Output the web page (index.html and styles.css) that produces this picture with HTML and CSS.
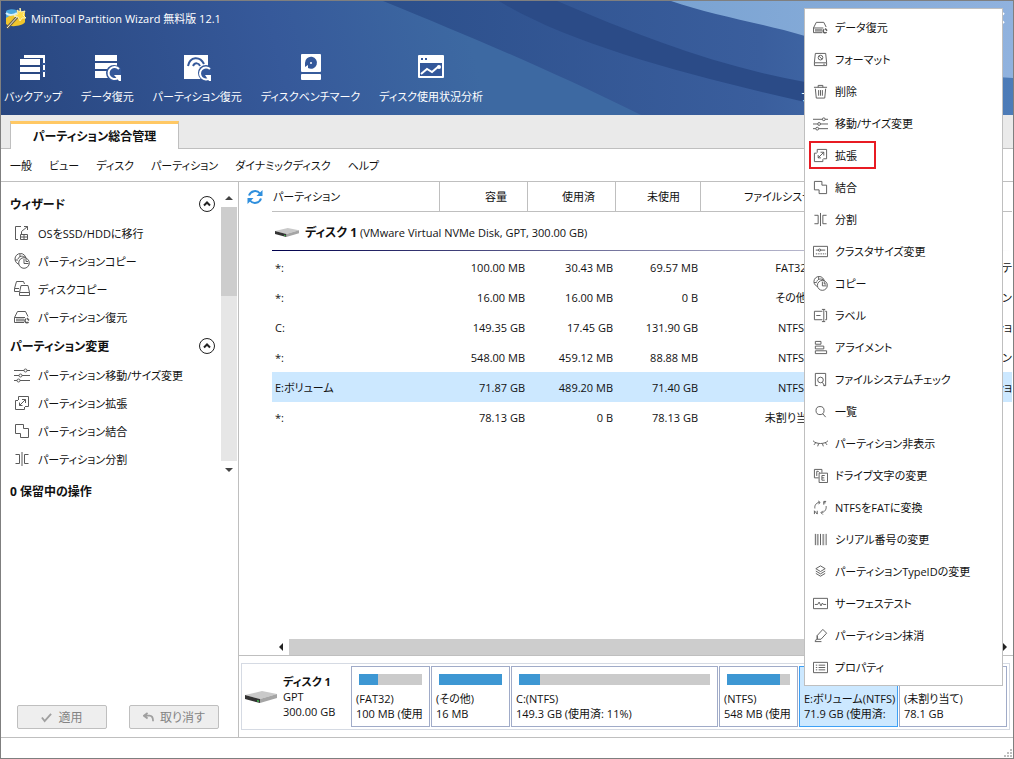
FILE: index.html
```html
<!DOCTYPE html>
<html lang="ja">
<head>
  <meta charset="UTF-8">
  <meta name="viewport" content="width=device-width, initial-scale=1">
  <title>MiniTool Partition Wizard 無料版 12.1</title>
  <link rel="stylesheet" href="styles.css">
</head>
<body>

<svg class="sprite" aria-hidden="true">
  <symbol id="i-recover" viewBox="0 0 16 16">
    <path d="M0.500 8.500L3.500 2.500H11.500L14 7.500M0.500 8.500V13.500H10M0.500 8.500H11"/>
    <path d="M2 11H10" stroke-width="3" stroke="#999"/>
    <path d="M12 10a2 2 0 1 0 2.500 3M13 9l2 2.500" stroke-width="1.500"/>
  </symbol>
  <symbol id="i-format" viewBox="0 0 16 16">
    <path d="M2.500 1.500H13.500L14.500 11V14.500H1.500V11ZM1.500 11.500H14.500M11 13H12.500"/>
    <circle cx="8" cy="6" r="2.500"/><path d="M6.500 4.500L9.500 7.500"/>
  </symbol>
  <symbol id="i-trash" viewBox="0 0 16 16">
    <path d="M1 3.500H15M5.500 3.500V1.500H10.500V3.500M2.500 5L3.500 15H12.500L13.500 5M6 6.500V12.500M8 6.500V12.500M10 6.500V12.500"/>
  </symbol>
  <symbol id="i-resize" viewBox="0 0 16 16">
    <path d="M0 3.500H10M13 3.500H16M0 8.500H5M8 8.500H16M0 13.500H3M6 13.500H16"/>
    <circle cx="11.500" cy="3.500" r="1.500"/><circle cx="6.500" cy="8.500" r="1.500"/><circle cx="4.500" cy="13.500" r="1.500"/>
  </symbol>
  <symbol id="i-extend" viewBox="0 0 16 16">
    <path d="M4.500 5V1.500H14.500V11.500H11M4 5.500H1.500V14.500H10.500V12M5.500 10.500L11.500 4.500M8 4.500H11.500V8M5.500 7.500V10.500H8.500"/>
  </symbol>
  <symbol id="i-merge" viewBox="0 0 16 16">
    <path d="M1.500 1.500H9.500V5.500H14.500V14.500H6.500V10.500H1.500Z"/>
  </symbol>
  <symbol id="i-split" viewBox="0 0 16 16">
    <path d="M8 1V15M1.500 3.500H5.500V12.500H1.500M14.500 3.500H10.500V12.500H14.500"/>
  </symbol>
  <symbol id="i-cluster" viewBox="0 0 16 16">
    <path d="M0.500 2.500H15.500V13.500H0.500ZM3 6.500H6M8 6.500H13"/><circle cx="7" cy="6.500" r="1.200"/>
    <path d="M3 10.500H14" stroke-dasharray="1.500 1"/>
  </symbol>
  <symbol id="i-copy" viewBox="0 0 16 16">
    <circle cx="6.500" cy="6" r="5.500"/><path d="M6 1V4M1 7H4"/>
    <circle cx="10" cy="10" r="5.300" fill="#fff"/><path d="M4 6C5 3 9 2 12 5M10 6V10.500H14.500M12 6V8.500H14"/>
  </symbol>
  <symbol id="i-label" viewBox="0 0 16 16">
    <path d="M10 3.500H1.500V12.500H10M3.500 8H8M13 3.500H14.500V12.500H13M9.500 1.500H13M11.500 1.500V14.500M9.500 14.500H13"/>
  </symbol>
  <symbol id="i-align" viewBox="0 0 16 16">
    <path d="M2.500 1.500H8.500V4.500H2.500ZM2.500 6.500H11.500V9.500H2.500ZM2.500 11.500H14.500V14.500H2.500Z"/>
  </symbol>
  <symbol id="i-check" viewBox="0 0 16 16">
    <path d="M5 14.500H2.500V1.500H13.500V14.500H11"/><circle cx="8" cy="8.500" r="3"/><path d="M10 11L12.500 15"/>
  </symbol>
  <symbol id="i-search" viewBox="0 0 16 16">
    <circle cx="7.500" cy="7" r="4.300"/><path d="M10.500 10.500L13.500 14"/>
  </symbol>
  <symbol id="i-hide" viewBox="0 0 16 16">
    <path d="M0 5C3 9 13 9 16 5M3 7L1 9.500M6 8L5 11M10 8L11 11M13 7L15 9.500"/>
  </symbol>
  <symbol id="i-letter" viewBox="0 0 16 16">
    <path d="M6 10.500H1.500V1.500H9.500V5M6.500 5.500H15.500V15.500H6.500ZM4 3.500V8.500M4 3.500H5.500L7 5M12.500 8H9.500V13H12.500M9.500 10.500H12"/>
  </symbol>
  <symbol id="i-convert" viewBox="0 0 16 16">
    <path d="M7 2.500C3 3 1.500 6 2 9M5.500 1L7.500 2.500L6 4.500M14 6.500C14.500 10 12.500 13 9 13.500M10.500 11.500L8.500 13.500L10.500 15.500M11.500 5V1.500H14M11.500 3H13.500M1.500 15V11.500L4.500 15V11.500"/>
  </symbol>
  <symbol id="i-barcode" viewBox="0 0 16 16">
    <path d="M2.500 2V14M8 2V14M14 2V14"/><path d="M5 2V14M11 2V14" stroke-width="2" stroke="#999"/>
  </symbol>
  <symbol id="i-layers" viewBox="0 0 16 16">
    <path d="M8 2L13 5L8 8L3 5ZM3 7.500L8 10.500L13 7.500M3 10L8 13L13 10"/>
  </symbol>
  <symbol id="i-surface" viewBox="0 0 16 16">
    <path d="M0.500 2.500H15.500V13.500H0.500ZM2 9H5L6.500 6.500L8.500 10.500L10 7.500L11 9H14"/>
  </symbol>
  <symbol id="i-wipe" viewBox="0 0 16 16">
    <path d="M4.500 8L10.500 1.500L14.500 5.500L8.500 12H4.500ZM4.500 8V12L2 13.500M2 14.500H9"/>
  </symbol>
  <symbol id="i-props" viewBox="0 0 16 16">
    <path d="M0.500 2.500H15.500V13.500H0.500ZM3 5.500H4.500M3 8H4.500M3 10.500H4.500M6 5.500H13M6 8H13M6 10.500H13"/>
  </symbol>
  <symbol id="i-migrate" viewBox="0 0 16 16">
    <path d="M7 1.500H1.500V14.500H4M6.500 9.500H13.500V14.500H6.500ZM10 9.500V14.500M6.500 12H13.500M7.500 9V6.500L13.500 1.500M10 1.500H13.500V5"/>
  </symbol>
  <symbol id="i-diskcopy" viewBox="0 0 16 16">
    <path d="M5 10.500H0.500V7.500L2.500 0.500H9.500L10.500 3M0.500 7.500H5M7 4.500H14L15.500 11.500V14.500H5.500V11.500ZM5.500 11.500H15.500"/>
  </symbol>
  <symbol id="i-up" viewBox="0 0 18 18">
    <circle cx="9" cy="9" r="7.500"/><path d="M6 10.500L9 7.500L12 10.500" stroke-width="2"/>
  </symbol>
  <symbol id="i-disk" viewBox="0 0 32 14">
    <path d="M0 5L17 1L32 4L15 9Z" fill="#c9c9c9"/>
    <path d="M15 9L32 4V8L15 13Z" fill="#a5a5a5"/>
    <path d="M0 5L15 9V13L0 9Z" fill="#333"/>
    <path d="M12 10L14 10.500V12L12 11.500Z" fill="#3db54a"/>
  </symbol>
</svg>

<header class="banner">
  <svg class="waves" viewBox="0 0 1012 114" preserveAspectRatio="none" aria-hidden="true">
    <defs>
      <linearGradient id="base" gradientUnits="userSpaceOnUse" x1="0" y1="114" x2="460" y2="0">
        <stop offset="0" stop-color="#28467f"/><stop offset=".6" stop-color="#36599a"/><stop offset="1" stop-color="#3d69a2"/>
      </linearGradient>
      <linearGradient id="wave" x1="0" y1="0" x2="1" y2="0">
        <stop offset="0" stop-color="#2c4f8b"/><stop offset=".6" stop-color="#3a5e9d"/><stop offset="1" stop-color="#4d7cb8"/>
      </linearGradient>
      <linearGradient id="sky" x1="0" y1="0" x2="1" y2="0">
        <stop offset="0" stop-color="#7aa3d2"/><stop offset="1" stop-color="#90b2de"/>
      </linearGradient>
    </defs>
    <path fill="url(#base)" d="M0 0H1012V114H0Z"/>
    <path fill="url(#wave)" d="M382 0C470 36 540 65 640 114H1012V0Z"/>
    <path fill="#2b4b87" d="M498 0C570 44 690 75 804 101L860 110V90L804 81C720 66 640 36 556 0Z"/>
    <path fill="url(#sky)" d="M670 0C710 14 760 22 804 35C880 62 950 73 1012 77V0Z"/>
  </svg>

  <div class="titlebar">
    <svg class="logo" viewBox="0 0 22 22" aria-hidden="true">
      <path d="M1 5C1 2 12 1 12 5V15C10 18 1 17 1 14Z" fill="#49a7df"/>
      <path d="M1 11C6 8 12 5 20 6V15C18 19 5 21 1 17Z" fill="#f0c52c"/>
      <path d="M1 6C4 9 9 8 12 6" fill="none" stroke="#d6f0fb" stroke-width="2"/>
      <path d="M2 21L14 8" stroke="#6a604a" stroke-width="3"/>
      <path d="M2 21L14 8" stroke="#f5f0d0" stroke-width="1"/>
      <path d="M15 1L16 5L20 4L18 8L21 11L17 11L15 14L13 10L9 9L13 7L12 3L15 5Z" fill="#ffdc4a" stroke="#fff3b0"/>
    </svg>
    <h1>MiniTool Partition Wizard 無料版 12.1</h1>
    <button class="close" aria-label="閉じる">
      <svg viewBox="0 0 12 12"><path d="M1 1L11 11M11 1L1 11"/></svg>
    </button>
  </div>

  <nav class="toolbar">
    <button>
      <svg viewBox="0 0 28 28"><path d="M5 1H26V23H24V4H5Z"/><path d="M1 5H21V11H1ZM1 13H21V18H1ZM1 20H21V26H1Z"/><path class="cut" d="M23 10H27M23 17H27"/></svg>
      バックアップ
    </button>
    <button>
      <svg viewBox="0 0 28 28"><path d="M2 1H24V7H2ZM2 9H24V15H2ZM2 17H24V24H2Z"/><circle class="hole" cx="21" cy="19" r="8"/><path class="ring" d="M26 15A6 6 0 1 0 25 24"/><path d="M21 21H28V27H26Z"/></svg>
      データ復元
    </button>
    <button>
      <svg viewBox="0 0 28 28"><path d="M1 1H25V25H1Z"/><path class="arc" d="M5 12C7 2 17 2 21 10M10 12C12 8 16 9 17 12"/><circle class="hole" cx="23" cy="19" r="8"/><path class="ring" d="M27 15A6 6 0 1 0 27 24"/><path d="M22 21H28V27H26Z"/></svg>
      パーティション復元
    </button>
    <button>
      <svg viewBox="0 0 28 28"><rect x="4" y="0" width="20" height="18" rx="1"/><rect x="4" y="20" width="20" height="6" rx="1"/><path class="hole" d="M8 9A6 6 0 1 1 11 14V11L8 13Z"/><circle cx="14" cy="9" r="1"/></svg>
      ディスクベンチマーク
    </button>
    <button>
      <svg viewBox="0 0 28 28"><rect x="1" y="1" width="26" height="23" rx="1"/><path class="hole" d="M3 9H25V22H3ZM4 4H6V6H4ZM8 4H10V6H8Z"/><path class="ring" d="M4 20L10 15L15 18L22 12"/><circle cx="22" cy="13" r="2"/></svg>
      ディスク使用状況分析
    </button>
    <button class="media">
      <svg viewBox="0 0 28 28"><circle class="ring" cx="14" cy="14" r="11"/></svg>
      ブータブルメディア
    </button>
  </nav>
</header>

<div class="tabs">
  <button class="tab">パーティション総合管理</button>
</div>

<nav class="menubar">
  <a href="#">一般</a>
  <a href="#">ビュー</a>
  <a href="#">ディスク</a>
  <a href="#">パーティション</a>
  <a href="#">ダイナミックディスク</a>
  <a href="#">ヘルプ</a>
</nav>

<div class="body">
  <aside class="sidebar">
    <div class="panel">
      <div class="groups">
        <h2>ウィザード <svg class="toggle"><use href="#i-up"/></svg></h2>
        <ul>
          <li><button><svg><use href="#i-migrate"/></svg>OSをSSD/HDDに移行</button></li>
          <li><button><svg><use href="#i-copy"/></svg>パーティションコピー</button></li>
          <li><button><svg><use href="#i-diskcopy"/></svg>ディスクコピー</button></li>
          <li><button><svg><use href="#i-recover"/></svg>パーティション復元</button></li>
        </ul>
        <h2>パーティション変更 <svg class="toggle"><use href="#i-up"/></svg></h2>
        <ul>
          <li><button><svg><use href="#i-resize"/></svg>パーティション移動/サイズ変更</button></li>
          <li><button><svg><use href="#i-extend"/></svg>パーティション拡張</button></li>
          <li><button><svg><use href="#i-merge"/></svg>パーティション結合</button></li>
          <li><button><svg><use href="#i-split"/></svg>パーティション分割</button></li>
        </ul>
      </div>
      <div class="vscroll">
        <span class="arrow up"></span>
        <span class="track"><span class="thumb"></span></span>
        <span class="arrow down"></span>
      </div>
    </div>
    <h2 class="pending">0 保留中の操作</h2>
    <div class="actions">
      <button disabled><svg viewBox="0 0 12 12"><path d="M1 6L4 10L11 2"/></svg>適用</button>
      <button disabled><svg viewBox="0 0 12 12"><path d="M5 1L1 4L5 7M1 4H7C10 4 11 6 11 10"/></svg>取り消す</button>
    </div>
  </aside>

  <main class="main">
    <div class="list">
      <button class="refresh" aria-label="更新">
        <svg viewBox="0 0 16 16"><path d="M2 6.500A6.300 6.300 0 0 1 13 4.500M14 9.500A6.300 6.300 0 0 1 3 11.500"/><path class="tip" d="M15.500 1V7H9.500ZM0.500 15V9H6.500Z"/></svg>
      </button>
      <table>
        <colgroup><col class="c-part"><col class="c-size"><col class="c-size"><col class="c-free"><col class="c-fs"><col></colgroup>
        <thead>
          <tr><th>パーティション</th><th>容量</th><th>使用済</th><th>未使用</th><th class="fs">ファイルシステム</th><th></th></tr>
        </thead>
        <tbody>
          <tr class="disk"><td colspan="6"><div><svg><use href="#i-disk"/></svg><span><b>ディスク 1</b> (VMware Virtual NVMe Disk, GPT, 300.00 GB)</span></div></td></tr>
          <tr><td>*:</td><td>100.00 MB</td><td>30.43 MB</td><td>69.57 MB</td><td>FAT32</td><td>システムパーテ</td></tr>
          <tr><td>*:</td><td>16.00 MB</td><td>16.00 MB</td><td>0 B</td><td>その他</td><td>予約パーティション</td></tr>
          <tr><td>C:</td><td>149.35 GB</td><td>17.45 GB</td><td>131.90 GB</td><td>NTFS</td><td>データパーティショ</td></tr>
          <tr><td>*:</td><td>548.00 MB</td><td>459.12 MB</td><td>88.88 MB</td><td>NTFS</td><td>回復パーティション</td></tr>
          <tr class="selected"><td>E:ボリューム</td><td>71.87 GB</td><td>489.20 MB</td><td>71.40 GB</td><td>NTFS</td><td>データパーティショ</td></tr>
          <tr><td>*:</td><td>78.13 GB</td><td>0 B</td><td>78.13 GB</td><td>未割り当て</td><td></td></tr>
        </tbody>
      </table>
    </div>

    <div class="hscroll">
      <span class="arrow left"></span>
      <span class="thumb"></span>
      <span class="arrow right"></span>
    </div>

    <div class="map">
      <div class="drive">
        <svg><use href="#i-disk"/></svg>
        <p><b>ディスク 1</b><br>GPT<br>300.00 GB</p>
      </div>
      <div class="part"><div class="bar"><span style="width: 30%"></span></div>(FAT32)<br>100 MB (使用</div>
      <div class="part"><div class="bar"><span style="width: 100%"></span></div>(その他)<br>16 MB</div>
      <div class="part wide"><div class="bar"><span style="width: 11%"></span></div>C:(NTFS)<br>149.3 GB (使用済: 11%)</div>
      <div class="part"><div class="bar"><span style="width: 84%"></span></div>(NTFS)<br>548 MB (使用</div>
      <div class="part mid selected"><div class="bar"><span style="width: 1%"></span></div>E:ボリューム(NTFS)<br>71.9 GB (使用済:</div>
      <div class="part rest"><div class="bar"></div>(未割り当て)<br>78.1 GB</div>
    </div>
  </main>
</div>

<footer class="status">
  <svg viewBox="0 0 9 9"><path d="M6 0H8V2H6ZM3 3H5V5H3ZM6 3H8V5H6ZM0 6H2V8H0ZM3 6H5V8H3ZM6 6H8V8H6Z"/></svg>
</footer>

<ul class="context">
  <li><button><svg><use href="#i-recover"/></svg>データ復元</button></li>
  <li><button><svg><use href="#i-format"/></svg>フォーマット</button></li>
  <li><button><svg><use href="#i-trash"/></svg>削除</button></li>
  <li><button><svg><use href="#i-resize"/></svg>移動/サイズ変更</button></li>
  <li><button class="marked"><svg><use href="#i-extend"/></svg>拡張</button></li>
  <li><button><svg><use href="#i-merge"/></svg>結合</button></li>
  <li><button><svg><use href="#i-split"/></svg>分割</button></li>
  <li><button><svg><use href="#i-cluster"/></svg>クラスタサイズ変更</button></li>
  <li><button><svg><use href="#i-copy"/></svg>コピー</button></li>
  <li><button><svg><use href="#i-label"/></svg>ラベル</button></li>
  <li><button><svg><use href="#i-align"/></svg>アライメント</button></li>
  <li><button><svg><use href="#i-check"/></svg>ファイルシステムチェック</button></li>
  <li><button><svg><use href="#i-search"/></svg>一覧</button></li>
  <li><button><svg><use href="#i-hide"/></svg>パーティション非表示</button></li>
  <li><button><svg><use href="#i-letter"/></svg>ドライブ文字の変更</button></li>
  <li><button><svg><use href="#i-convert"/></svg>NTFSをFATに変換</button></li>
  <li><button><svg><use href="#i-barcode"/></svg>シリアル番号の変更</button></li>
  <li><button><svg><use href="#i-layers"/></svg>パーティションTypeIDの変更</button></li>
  <li><button><svg><use href="#i-surface"/></svg>サーフェステスト</button></li>
  <li><button><svg><use href="#i-wipe"/></svg>パーティション抹消</button></li>
  <li><button><svg><use href="#i-props"/></svg>プロパティ</button></li>
</ul>

</body>
</html>
```
FILE: styles.css
```css
* {
  box-sizing: border-box;
}
body {
  position: relative;
  margin: 0;
  min-height: 100vh;
  display: flex;
  flex-direction: column;
  border: 1px solid #7f7f7f;
  background: #fff;
  color: #111;
  font-family: "Open Sans", "Noto Sans CJK JP", sans-serif;
  font-size: 11px;
  line-height: 15px;
  font-feature-settings: "palt";
  overflow: hidden;
}
button {
  padding: 0;
  border: none;
  background: none;
  color: inherit;
  font: inherit;
  font-feature-settings: inherit;
  white-space: nowrap;
}
ul {
  margin: 0;
  padding: 0;
  list-style: none;
}
h1, h2, p {
  margin: 0;
}
svg {
  flex: none;
  fill: none;
  stroke: #5a5a5a;
}
.sprite {
  position: absolute;
  width: 0;
  height: 0;
}

/* banner */
.banner {
  position: relative;
  height: 114px;
  overflow: hidden;
  color: #fff;
}
.waves {
  position: absolute;
  width: 100%;
  height: 100%;
  stroke: none;
}
.titlebar {
  position: relative;
  display: flex;
  align-items: center;
  gap: 4px;
  height: 34px;
  padding: 0 8px 0 4px;
}
.logo {
  width: 22px;
  height: 22px;
  stroke: none;
}
h1 {
  flex: 1;
  font-size: 11px;
  font-weight: normal;
}
.close svg {
  display: block;
  width: 12px;
  height: 12px;
  stroke: #fff;
  stroke-width: 2;
}
.toolbar {
  position: relative;
  display: flex;
  gap: 19px;
  padding: 19px 0 0 3px;
}
.toolbar button {
  display: flex;
  flex-direction: column;
  align-items: center;
  gap: 7px;
}
.toolbar svg {
  width: 28px;
  height: 28px;
  fill: #fff;
  stroke: none;
}
.toolbar .hole {
  fill: #34589a;
}
.toolbar .ring, .toolbar .arc, .toolbar .cut {
  fill: none;
  stroke: #fff;
  stroke-width: 2;
}
.toolbar .arc, .toolbar .cut {
  stroke: #34589a;
}
.toolbar .media {
  margin-left: auto;
  margin-right: 124px;
}

/* tabs and menu */
.tabs {
  height: 34px;
  padding: 6px 9px 0;
  background: #eaeaea;
  border-bottom: 1px solid #bfbfbf;
}
.tab {
  width: 169px;
  height: 28px;
  background: #fff;
  border: 1px solid #bfbfbf;
  border-top: 3px solid #ffc864;
  border-bottom: none;
  font-size: 12px;
  font-weight: bold;
}
.menubar {
  display: flex;
  align-items: center;
  gap: 17px;
  height: 33px;
  padding: 0 9px;
  border-bottom: 1px solid #bfbfbf;
}
.menubar a {
  color: inherit;
  text-decoration: none;
}

.body {
  flex: 1;
  display: flex;
  border-bottom: 1px solid #bfbfbf;
}

/* sidebar */
.sidebar {
  flex: none;
  width: 238px;
  display: flex;
  flex-direction: column;
  border-right: 1px solid #bfbfbf;
}
.panel {
  display: flex;
  padding: 7px 1px 0 9px;
}
.groups {
  flex: 1;
  padding-bottom: 6px;
}
.groups h2 {
  display: flex;
  align-items: center;
  justify-content: space-between;
  height: 30px;
  padding-right: 5px;
}
h2 {
  font-size: 12px;
}
.toggle {
  width: 18px;
  height: 18px;
  stroke: #222;
}
.groups button {
  display: flex;
  align-items: center;
  gap: 8px;
  height: 28px;
  padding-left: 4px;
}
.groups button svg {
  width: 16px;
  height: 16px;
}
.vscroll {
  display: flex;
  flex-direction: column;
  width: 16px;
}
.track {
  flex: 1;
  background: #e6e6e6;
}
.vscroll .thumb {
  display: block;
  height: 89px;
  background: #cdcdcd;
}
.arrow {
  flex: none;
  display: grid;
  place-items: center;
  width: 16px;
  height: 18px;
}
.arrow::before {
  content: "";
  border: 4px solid transparent;
}
.up::before {
  border-top-width: 0;
  border-bottom-color: #444;
}
.down::before {
  border-bottom-width: 0;
  border-top-color: #444;
}
.left::before {
  border-left-width: 0;
  border-right-color: #222;
}
.right::before {
  border-right-width: 0;
  border-left-color: #222;
}
.pending {
  padding: 5px 9px;
}
.actions {
  display: flex;
  gap: 22px;
  margin-top: auto;
  padding: 0 16px 8px;
}
.actions button {
  display: flex;
  align-items: center;
  justify-content: center;
  gap: 6px;
  width: 90px;
  height: 24px;
  background: #eee;
  border: 1px solid #bfbfbf;
  border-radius: 2px;
  color: #838383;
  font-size: 12px;
}
.actions svg {
  width: 11px;
  height: 11px;
  stroke: #a0a0a0;
  stroke-width: 2;
}

/* partition list */
.main {
  flex: 1;
  min-width: 0;
  display: flex;
  flex-direction: column;
}
.list {
  flex: 1;
  display: flex;
  align-items: flex-start;
  margin-right: 1px;
}
.refresh {
  flex: none;
  width: 33px;
  height: 30px;
  padding-left: 8px;
}
.refresh svg {
  display: block;
  width: 16px;
  height: 16px;
  stroke: #2f8fdd;
  stroke-width: 2;
}
.refresh .tip {
  fill: #2f8fdd;
  stroke: none;
}
table {
  flex: 1;
  width: 100%;
  table-layout: fixed;
  border-collapse: separate;
  border-spacing: 0;
}
.c-part {
  width: 168px;
}
.c-size {
  width: 88px;
}
.c-free {
  width: 85px;
}
.c-fs {
  width: 180px;
}
th, td {
  height: 30px;
  padding: 0 3px;
  text-align: right;
  white-space: nowrap;
}
th {
  padding-right: 20px;
  border-right: 1px solid #bfbfbf;
  border-bottom: 1px solid #bfbfbf;
  font-weight: normal;
}
th:first-child, td:first-child, th.fs {
  text-align: left;
}
th:first-child {
  padding-left: 1px;
}
th.fs {
  padding-left: 43px;
}
th:last-child {
  border-right: none;
}
td:nth-child(5) {
  text-align: center;
}
td:last-child {
  padding-right: 0;
}
.disk td {
  height: 40px;
  background: linear-gradient(90deg, #00004c, #fff) 0 38px / 100% 1px no-repeat;
}
.disk td:first-child {
  padding-left: 3px;
}
.disk div {
  display: flex;
  align-items: center;
  gap: 6px;
}
.disk svg {
  width: 24px;
  height: 11px;
  stroke: none;
}
.disk b {
  font-size: 12px;
}
tr.selected {
  background: #cce8ff;
}
.hscroll {
  display: flex;
  height: 16px;
  margin-left: 34px;
}
.hscroll .arrow {
  height: 16px;
}
.hscroll .thumb {
  flex: 1;
  background: #cdcdcd;
}

/* disk map */
.map {
  display: flex;
  gap: 1px;
  border-top: 1px solid #bfbfbf;
  padding: 10px 6px 10px 6px;
  background:
    linear-gradient(#fff, #fff) 3px 8px / calc(100% - 7px) 65px no-repeat,
    linear-gradient(#d5dae3, #d5dae3) 2px 7px / calc(100% - 5px) 67px no-repeat;
}
.drive {
  flex: none;
  display: flex;
  align-items: center;
  gap: 6px;
  width: 105px;
}
.drive svg {
  width: 32px;
  height: 14px;
  stroke: none;
}
.drive p {
  white-space: nowrap;
}
.part {
  flex: none;
  width: 79px;
  height: 61px;
  padding: 7px 4px 0;
  border: 1px solid #a0abc8;
  overflow: hidden;
  white-space: nowrap;
}
.part.wide {
  width: 207px;
}
.part.mid {
  width: 99px;
}
.part.rest {
  flex: 1;
  width: auto;
}
.part.selected {
  background: #cce8ff;
  border-color: #3da0f5;
}
.bar {
  height: 11px;
  margin: 0 3px 6px;
  background: #cbcbcb;
}
.bar span {
  display: block;
  height: 100%;
  background: #3d97d3;
}

.status {
  height: 20px;
  display: flex;
  align-items: flex-end;
  justify-content: flex-end;
}
.status svg {
  width: 9px;
  height: 9px;
  fill: #bfbfbf;
  stroke: none;
}

/* context menu */
.context {
  position: absolute;
  top: 7px;
  right: 10px;
  width: 199px;
  padding: 2px 4px;
  background: #fff;
  border: 1px solid #bfbfbf;
}
.context li {
  padding: 2px 0;
}
.context button {
  display: flex;
  align-items: center;
  gap: 7px;
  height: 28px;
  padding: 0 17px 0 2px;
  border: 2px solid transparent;
}
.context .marked {
  border-color: #e81b23;
}
.context svg {
  width: 15px;
  height: 15px;
}
```
